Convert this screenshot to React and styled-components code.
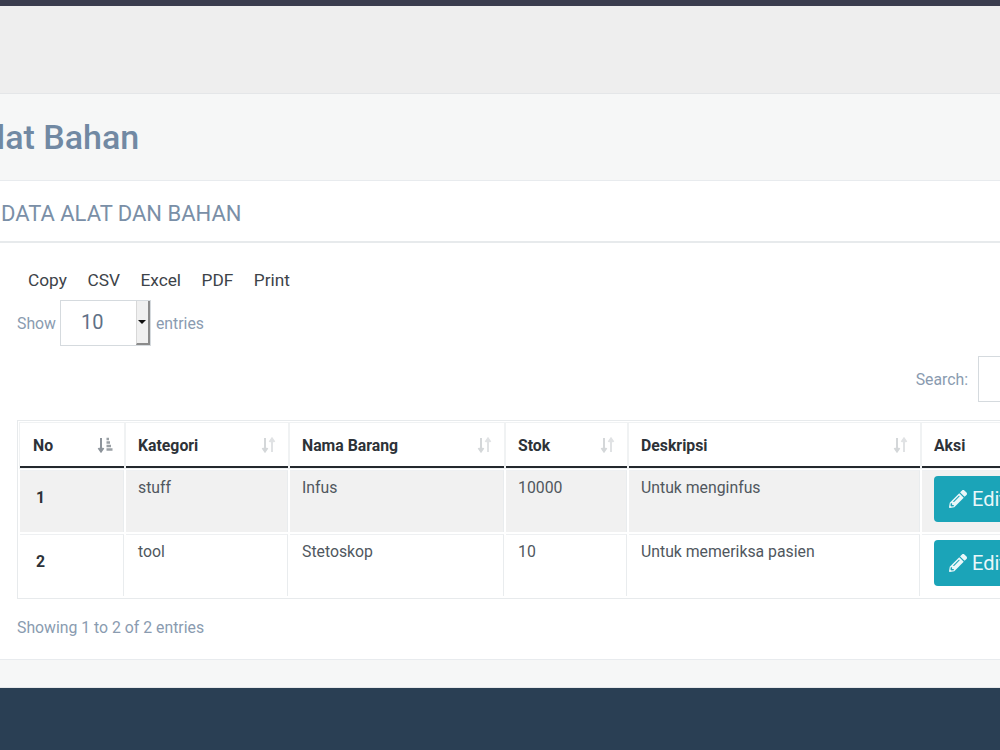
import React from 'react';
import styled, {createGlobalStyle} from 'styled-components';
import {FaPencilAlt} from 'react-icons/fa';

const Global = createGlobalStyle`
  html, body {
    margin: 0;
    padding: 0;
    background: #fff;
    overflow: hidden;
  }
  body {
    font-family: Roboto, "Liberation Sans", sans-serif;
    color: #676a6c;
  }
`;

const Page = styled.div`
  width: 1000px;
  height: 750px;
  overflow: hidden;
  display: flex;
  flex-direction: column;
`;

const TopBar = styled.div`
  height: 6px;
  background: #3a3d4e;
  flex: none;
`;

const Header = styled.div`
  height: 87px;
  flex: none;
  background: #eeeeee;
  border-bottom: 1px solid #e4e6e8;
`;

const TitleBand = styled.div`
  height: 86px;
  flex: none;
  display: flex;
  align-items: center;
  background: #f6f7f7;
  border-bottom: 1px solid #e8ebee;
  overflow: hidden;
`;

const Title = styled.h1`
  margin: 0 0 0 -26px;
  font-size: 34px;
  font-weight: 500;
  color: #7189a3;
  white-space: nowrap;
`;

const Card = styled.div`
  flex: none;
  height: 479px;
  background: #fff;
  border-bottom: 1px solid #e8ebee;
  box-sizing: border-box;
`;

const CardHeading = styled.div`
  height: 62px;
  box-sizing: border-box;
  padding: 4px 0 0 1px;
  display: flex;
  align-items: center;
  border-bottom: 2px solid #e7eaec;
  font-size: 22px;
  color: #7a8fa7;
`;

const CardBody = styled.div`
  padding: 25px 0 0 17px;
`;

const Buttons = styled.div`
  display: flex;
  gap: 20.500px;
  padding-left: 11px;
  font-size: 17.300px;
  line-height: 24px;
  color: #3d4349;
`;

const Length = styled.div`
  display: flex;
  align-items: center;
  height: 46px;
  margin-top: 8px;
  font-size: 15.800px;
  color: #8a9bb0;
`;

const Select = styled.div`
  width: 91px;
  height: 46px;
  margin: 0 5px 0 4px;
  box-sizing: border-box;
  border: 1px solid #d5dade;
  background: #fff;
  display: flex;
  justify-content: space-between;
  font-size: 20px;
  color: #5f7186;
`;

const SelectValue = styled.span`
  padding-left: 20px;
  line-height: 42px;
`;

const Spinner = styled.span`
  width: 11px;
  display: flex;
  align-items: center;
  justify-content: center;
  background: #f0f0f0;
  border-right: 2px solid #8b8b8b;
  border-bottom: 2px solid #8b8b8b;
  border-left: 1px solid #d8d8d8;
  &::after {
    content: "";
    border-left: 4px solid transparent;
    border-right: 4px solid transparent;
    border-top: 4px solid #111;
  }
`;

const SearchRow = styled.div`
  display: flex;
  align-items: center;
  justify-content: flex-end;
  width: 1081px;
  height: 46px;
  margin-top: 10px;
  font-size: 15.800px;
  color: #8a9bb0;
`;

const SearchInput = styled.div`
  width: 120px;
  height: 46px;
  margin-left: 10px;
  box-sizing: border-box;
  border: 1px solid #d5dade;
  background: #fff;
`;

const Table = styled.table`
  margin-top: 18px;
  width: 1078px;
  table-layout: fixed;
  border: 1px solid #e7eaec;
  border-spacing: 2px;
  border-collapse: separate;
  font-size: 15.800px;
`;

const Th = styled.th`
  height: 45px;
  padding: 1px 11px 0 12px;
  box-sizing: border-box;
  background: #fff;
  border-bottom: 2px solid #23282d;
  box-shadow: 0 0 0 1px #f0f2f3;
  text-align: left;
  font-weight: 700;
  color: #2d3238;
  &:first-child {
    padding-left: 13px;
  }
`;

const ThInner = styled.div`
  display: flex;
  align-items: center;
  justify-content: space-between;
`;

const Td = styled.td`
  height: 62px;
  padding: 6.500px 12px 0;
  box-sizing: border-box;
  vertical-align: top;
  line-height: 19px;
  color: #50575e;
  background-color: ${p => (p.$striped ? '#f1f1f1' : '#fff')};
  background-clip: padding-box;
  border-top: 1px solid #eef0f2;
  border-right: 1px solid #e9ecee;
`;

const NoCell = styled(Td)`
  padding: 17px 16px 0;
  font-weight: 700;
  color: #2d3238;
`;

const ActionCell = styled(Td)`
  padding: 4.500px 12px 0;
`;

const EditButton = styled.button`
  display: flex;
  align-items: center;
  gap: 5px;
  width: 90px;
  height: 46px;
  padding: 0 0 0 15px;
  border: 0;
  border-radius: 4px;
  background: #1ba4b8;
  color: #eaf7f9;
  font-family: inherit;
  font-size: 20px;
`;

const Info = styled.div`
  margin-top: 19px;
  font-size: 15.800px;
  line-height: 20px;
  color: #8a9bb0;
`;

const Gap = styled.div`
  height: 28px;
  flex: none;
  background: #f6f7f7;
  border-bottom: 1px solid #e6e8ea;
  box-sizing: border-box;
`;

const Footer = styled.div`
  flex: 1;
  background: #2a3f54;
`;

const SortIcon = ({active}) => (
  <svg width="16" height="16" viewBox="0 0 16 16" fill="none">
    <path d="M4 1v13M1.500 11 4 14.500 6.500 11" stroke={active ? '#8d949b' : '#d4d7d9'} strokeWidth="2" />
    {active ? (
      <path d="M9.500 2h2.500M9.500 5.500h3.500M9.500 9h4.500M9.500 12.500h6" stroke="#9aa0a5" strokeWidth="2.500" />
    ) : (
      <path d="M11 15V2M8.500 5 11 1.500 13.500 5" stroke="#e0e2e4" strokeWidth="2" />
    )}
  </svg>
);

const columns = [
  {label: 'No', width: 104, active: true},
  {label: 'Kategori', width: 162},
  {label: 'Nama Barang', width: 214},
  {label: 'Stok', width: 121},
  {label: 'Deskripsi', width: 291},
  {label: 'Aksi', width: 170, plain: true},
];

const rows = [
  {no: 1, kategori: 'stuff', nama: 'Infus', stok: '10000', deskripsi: 'Untuk menginfus'},
  {no: 2, kategori: 'tool', nama: 'Stetoskop', stok: '10', deskripsi: 'Untuk memeriksa pasien'},
];

export default function App() {
  return (
    <Page>
      <Global />
      <TopBar />
      <Header />
      <TitleBand>
        <Title>Alat Bahan</Title>
      </TitleBand>
      <Card>
        <CardHeading>DATA ALAT DAN BAHAN</CardHeading>
        <CardBody>
          <Buttons>
            <span>Copy</span>
            <span>CSV</span>
            <span>Excel</span>
            <span>PDF</span>
            <span>Print</span>
          </Buttons>
          <Length>
            Show
            <Select>
              <SelectValue>10</SelectValue>
              <Spinner />
            </Select>
            entries
          </Length>
          <SearchRow>
            Search:
            <SearchInput />
          </SearchRow>
          <Table>
            <colgroup>
              {columns.map(c => (
                <col key={c.label} style={{width: c.width}} />
              ))}
            </colgroup>
            <thead>
              <tr>
                {columns.map(c => (
                  <Th key={c.label}>
                    <ThInner>
                      {c.label}
                      {!c.plain && <SortIcon active={c.active} />}
                    </ThInner>
                  </Th>
                ))}
              </tr>
            </thead>
            <tbody>
              {rows.map((r, i) => (
                <tr key={r.no}>
                  <NoCell $striped={i === 0}>{r.no}</NoCell>
                  <Td $striped={i === 0}>{r.kategori}</Td>
                  <Td $striped={i === 0}>{r.nama}</Td>
                  <Td $striped={i === 0}>{r.stok}</Td>
                  <Td $striped={i === 0}>{r.deskripsi}</Td>
                  <ActionCell $striped={i === 0}>
                    <EditButton>
                      <FaPencilAlt size={18} />
                      Edit
                    </EditButton>
                  </ActionCell>
                </tr>
              ))}
            </tbody>
          </Table>
          <Info>Showing 1 to 2 of 2 entries</Info>
        </CardBody>
      </Card>
      <Gap />
      <Footer />
    </Page>
  );
}
